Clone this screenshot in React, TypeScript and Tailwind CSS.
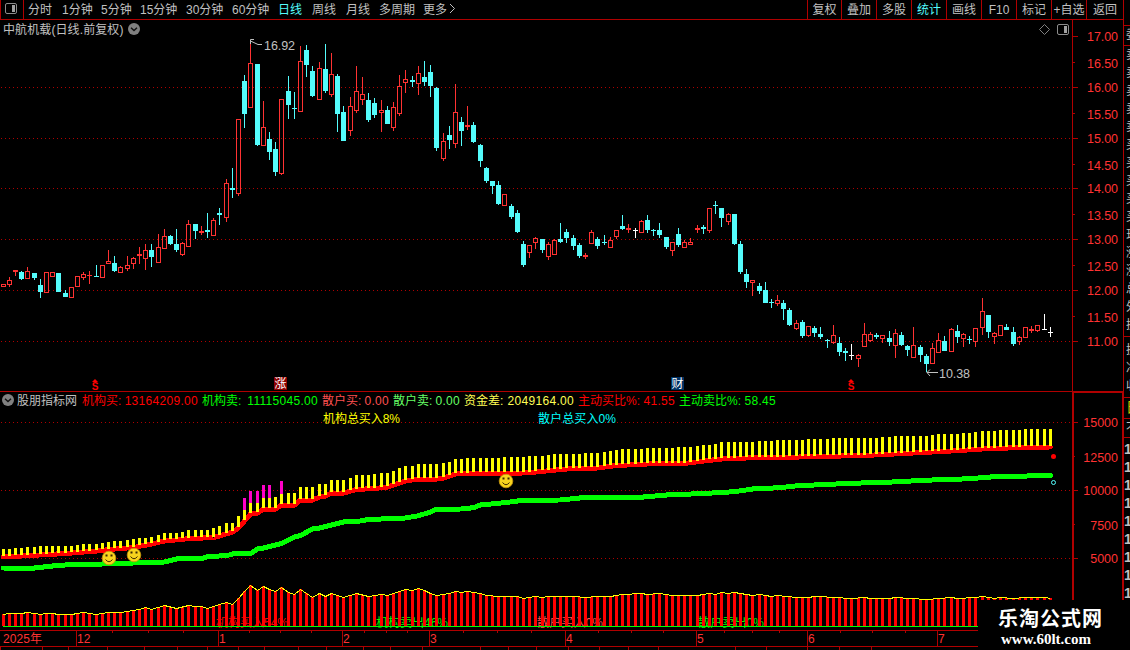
// App.tsx
// 行情日K线页：顶部周期工具栏、K线主图、资金指标副图、日期轴、右侧盘口边条。

type Kind = "r" | "c" | "w";
// [颜色, 最高, 实体上沿, 实体下沿, 最低]，单位为像素
type Candle = [Kind, number, number, number, number];
type Point = [number, number];

const candles: Candle[] = [
  ["r", 284, 284, 287, 287], ["r", 277, 280, 285, 287], ["r", 270, 270, 272, 276], ["c", 271, 272, 279, 280],
  ["r", 267, 271, 279, 279], ["c", 273, 273, 278, 280], ["c", 279, 285, 292, 298], ["r", 272, 272, 293, 293],
  ["r", 272, 272, 277, 277], ["c", 273, 273, 292, 292], ["c", 290, 293, 297, 297], ["r", 287, 287, 298, 298],
  ["r", 276, 276, 287, 287], ["r", 272, 274, 278, 280], ["r", 271, 275, 276, 284], ["c", 265, 276, 277, 277],
  ["r", 265, 265, 278, 278], ["r", 250, 261, 264, 264], ["c", 256, 263, 271, 272], ["r", 266, 267, 273, 273],
  ["r", 256, 265, 269, 271], ["r", 257, 258, 264, 269], ["r", 247, 254, 256, 264], ["r", 244, 250, 259, 270],
  ["c", 244, 250, 257, 267], ["r", 234, 247, 263, 263], ["r", 229, 236, 249, 249], ["c", 235, 236, 244, 245],
  ["c", 229, 244, 250, 252], ["r", 242, 243, 255, 256], ["r", 220, 224, 247, 247], ["c", 224, 224, 231, 239],
  ["r", 226, 231, 233, 235], ["c", 213, 230, 232, 238], ["r", 218, 220, 236, 236], ["c", 208, 213, 215, 225],
  ["r", 179, 183, 218, 222], ["c", 168, 188, 190, 198], ["r", 119, 119, 194, 196], ["c", 75, 81, 114, 128],
  ["r", 43, 63, 108, 108], ["c", 64, 64, 145, 146], ["r", 101, 127, 146, 146], ["c", 132, 139, 152, 160],
  ["c", 142, 149, 172, 176], ["r", 99, 99, 174, 175], ["c", 76, 91, 105, 119], ["c", 92, 108, 109, 119],
  ["r", 46, 61, 112, 112], ["c", 45, 50, 65, 77], ["c", 66, 71, 96, 97], ["r", 62, 68, 100, 100],
  ["c", 44, 69, 91, 93], ["r", 53, 74, 95, 97], ["c", 74, 76, 114, 132], ["c", 106, 112, 141, 141],
  ["r", 97, 106, 131, 136], ["r", 66, 91, 111, 113], ["r", 77, 94, 100, 105], ["c", 93, 100, 120, 122],
  ["c", 98, 103, 115, 118], ["r", 100, 110, 113, 132], ["c", 106, 110, 124, 124], ["r", 102, 107, 128, 131],
  ["r", 75, 86, 114, 116], ["r", 70, 79, 83, 93], ["c", 76, 80, 82, 87], ["r", 66, 73, 84, 95],
  ["c", 61, 77, 82, 86], ["c", 65, 72, 86, 97], ["c", 87, 88, 148, 151], ["r", 133, 141, 159, 161],
  ["c", 126, 135, 140, 149], ["r", 84, 112, 144, 148], ["c", 117, 122, 131, 146], ["r", 106, 125, 127, 130],
  ["c", 122, 125, 142, 143], ["c", 144, 145, 161, 167], ["c", 167, 168, 181, 183], ["c", 181, 181, 186, 194],
  ["c", 181, 185, 204, 205], ["r", 194, 194, 206, 206], ["c", 204, 206, 217, 219], ["c", 210, 213, 232, 233],
  ["c", 241, 244, 265, 267], ["r", 245, 245, 253, 258], ["r", 237, 238, 243, 249], ["c", 239, 239, 250, 253],
  ["r", 242, 244, 257, 260], ["r", 239, 240, 255, 255], ["c", 223, 239, 242, 243], ["c", 229, 232, 238, 243],
  ["c", 235, 238, 246, 250], ["c", 243, 245, 256, 258], ["r", 253, 255, 257, 259], ["r", 230, 232, 244, 244],
  ["c", 237, 239, 246, 249], ["c", 235, 242, 243, 245], ["r", 237, 240, 248, 248], ["r", 230, 230, 237, 239],
  ["c", 215, 226, 229, 230], ["r", 224, 228, 230, 233], ["w", 228, 230, 231, 238], ["r", 220, 221, 233, 233],
  ["c", 215, 220, 230, 233], ["c", 229, 230, 231, 236], ["c", 223, 230, 235, 238], ["c", 237, 237, 247, 249],
  ["r", 242, 242, 251, 256], ["c", 228, 234, 245, 247], ["r", 240, 242, 248, 248], ["r", 238, 242, 245, 245],
  ["r", 225, 228, 230, 233], ["c", 225, 227, 229, 234], ["r", 208, 208, 231, 233], ["c", 201, 205, 206, 214],
  ["c", 208, 208, 218, 227], ["r", 213, 214, 222, 225], ["c", 214, 214, 244, 245], ["c", 241, 244, 272, 274],
  ["c", 269, 274, 282, 288], ["r", 280, 280, 283, 296], ["c", 283, 286, 291, 294], ["c", 282, 290, 303, 303],
  ["c", 299, 302, 303, 308], ["r", 295, 300, 304, 306], ["c", 300, 303, 309, 320], ["c", 308, 310, 325, 326],
  ["r", 320, 323, 329, 330], ["c", 320, 322, 336, 338], ["r", 326, 326, 336, 337], ["c", 326, 328, 333, 337],
  ["c", 327, 334, 337, 339], ["c", 339, 340, 341, 348], ["r", 325, 335, 343, 344], ["c", 337, 343, 352, 356],
  ["c", 348, 351, 353, 361], ["w", 344, 355, 356, 360], ["r", 354, 355, 359, 367], ["r", 323, 334, 347, 347],
  ["r", 332, 334, 341, 342], ["c", 333, 335, 337, 339], ["r", 335, 335, 339, 343], ["c", 331, 338, 342, 346],
  ["r", 329, 333, 346, 358], ["c", 332, 335, 345, 346], ["c", 345, 346, 350, 356], ["r", 327, 345, 358, 358],
  ["c", 345, 347, 355, 362], ["c", 354, 356, 364, 372], ["r", 343, 348, 364, 364], ["r", 333, 340, 353, 353],
  ["c", 336, 341, 351, 351], ["r", 328, 329, 352, 352], ["c", 325, 331, 337, 343], ["r", 333, 334, 339, 347],
  ["c", 336, 339, 340, 344], ["r", 328, 328, 342, 347], ["r", 298, 311, 328, 335], ["c", 315, 315, 332, 338],
  ["r", 332, 333, 337, 344], ["r", 325, 325, 336, 336], ["c", 324, 327, 330, 330], ["c", 327, 332, 344, 346],
  ["r", 336, 337, 342, 345], ["r", 327, 327, 338, 338], ["r", 326, 329, 331, 333], ["r", 325, 325, 331, 332],
  ["w", 314, 329, 330, 330], ["w", 327, 332, 333, 337],
];

const fill: Record<Kind, string> = { r: "#ff3232", c: "#54fcfc", w: "#ffffff" };

// 以下序列按 [K线序号, y] 给出拐点，中间线性插值
const barTop: Point[] = [
  [0, 549], [1, 549], [2, 548], [4, 547], [7, 546], [11, 546], [12, 545], [13, 544], [15, 544], [16, 543], [17, 542],
  [20, 540], [22, 538], [24, 537], [26, 533], [28, 533], [30, 530], [33, 530], [35, 526], [36, 523], [37, 523],
  [38, 516], [39, 510], [40, 503], [41, 503], [42, 498], [43, 498], [44, 497], [45, 494], [46, 493], [47, 493],
  [48, 487], [50, 487], [51, 484], [52, 484], [53, 480], [55, 480], [56, 478], [57, 475], [59, 475], [61, 473],
  [62, 473], [63, 471], [64, 468], [65, 466], [66, 466], [67, 464], [70, 464], [72, 462], [73, 459], [74, 459],
  [75, 458], [80, 458], [81, 457], [84, 457], [85, 456], [87, 456], [89, 454], [93, 454], [94, 453], [96, 453],
  [100, 449], [103, 449], [104, 448], [108, 448], [109, 447], [111, 447], [113, 445], [114, 445], [115, 444],
  [116, 442], [121, 442], [122, 441], [124, 441], [125, 440], [129, 440], [130, 439], [133, 439], [134, 438],
  [141, 438], [142, 437], [143, 437], [144, 436], [149, 436], [151, 434], [154, 434], [155, 433], [156, 433],
  [158, 431], [160, 431], [161, 430], [164, 430], [165, 429], [169, 429],
];
const redLine: Point[] = [
  [0, 557], [10, 553.5], [15, 551], [18, 549], [21, 547.5], [24, 544], [26, 541], [30, 538.7], [34, 537.5], [35, 536],
  [37, 532], [38, 528], [39, 521], [40, 514], [41, 513], [42, 509], [44, 509], [45, 505], [47, 505], [48, 500],
  [50, 500], [51, 497], [52, 496], [53, 493], [55, 493], [57, 489.5], [60, 488.5], [62, 487], [64, 483], [65, 481],
  [67, 479], [70, 479], [71, 478], [73, 474], [75, 473.5], [84, 473], [86, 472], [91, 469], [96, 468], [99, 465.5],
  [104, 464], [110, 463.5], [113, 461], [116, 459], [120, 458], [125, 457.7], [130, 456.7], [139, 455.5],
  [147, 453], [153, 451], [158, 449], [165, 447.3], [169, 447],
];
const greenLine: Point[] = [
  [0, 568], [5, 568], [8, 566], [10, 565], [16, 564], [21, 563], [26, 562], [28, 559], [32, 558.7], [33, 556.5],
  [36, 555.7], [37, 554], [40, 553.5], [41, 549], [42, 548], [45, 543.5], [47, 537], [48, 535.5], [50, 529],
  [51, 528], [53, 525], [55, 522], [57, 521.7], [59, 519.5], [61, 519], [65, 518], [67, 515.7], [69, 512],
  [70, 509.2], [74, 509], [76, 507.7], [77, 505], [81, 502.7], [84, 500.2], [90, 500], [93, 498], [102, 497.7],
  [107, 495], [113, 493.5], [118, 491.7], [121, 489], [126, 487.5], [127, 486.3], [131, 485], [137, 483.3],
  [145, 481.7], [148, 480.3], [152, 479.7], [156, 478.7], [160, 476.7], [169, 475.5],
];
const volumeTop: Point[] = [
  [0, 614], [1, 613], [3, 613], [4, 612], [5, 613], [6, 614], [7, 613], [8, 613], [9, 614], [11, 614], [13, 612],
  [15, 614], [17, 612], [19, 612], [22, 609], [23, 607], [24, 609], [26, 605], [28, 608], [30, 605], [31, 606],
  [32, 606], [33, 608], [35, 604], [36, 602], [37, 604], [38, 598], [39, 591], [40, 585], [41, 590], [42, 586],
  [43, 589], [44, 591], [45, 587], [46, 592], [47, 594], [48, 589], [49, 593], [50, 597], [51, 593], [52, 596],
  [53, 593], [54, 595], [55, 597], [57, 593], [59, 596], [61, 594], [62, 595], [63, 593], [64, 591], [65, 589],
  [66, 590], [67, 588], [68, 590], [69, 593], [70, 595], [72, 593], [73, 591], [74, 592], [75, 591], [77, 593],
  [78, 595], [80, 596], [83, 596], [84, 598], [86, 596], [87, 597], [88, 596], [92, 596], [94, 597], [96, 596],
  [98, 596], [100, 594], [103, 593], [104, 594], [106, 593], [108, 595], [112, 595], [114, 593], [115, 594],
  [116, 592], [117, 593], [118, 592], [121, 595], [122, 594], [124, 596], [125, 595], [128, 597], [130, 597],
  [131, 596], [132, 596], [134, 597], [137, 598], [139, 597], [140, 598], [143, 598], [144, 597], [149, 599],
  [153, 597], [154, 598], [157, 597], [158, 596], [160, 598], [161, 597], [163, 598], [165, 597], [168, 597],
  [169, 598],
];
const magentaBars: [number, number, number][] = [
  [39, 498, 510], [40, 491, 503], [41, 491, 503], [42, 485, 498], [43, 485, 498], [45, 481, 494],
];

const cx = (i: number) => Math.floor(3.1 + 6.196 * i);

function at(points: Point[], i: number) {
  const k = points.findIndex((p) => p[0] >= i);
  if (k <= 0) return points[0][1];
  const [x0, y0] = points[k - 1];
  const [x1, y1] = points[k];
  return y0 + ((y1 - y0) * (i - x0)) / (x1 - x0);
}

const path = (points: Point[], dy = 0) =>
  points.map(([i, y]) => `${cx(i) + 0.5},${y + dy}`).join(" ");

const periods = [
  { name: "分时", width: "w-[34px]" },
  { name: "1分钟", width: "w-[39px]" },
  { name: "5分钟", width: "w-[39px]" },
  { name: "15分钟", width: "w-[46px]" },
  { name: "30分钟", width: "w-[46px]" },
  { name: "60分钟", width: "w-[46px]" },
  { name: "日线", width: "w-[34px]" },
  { name: "周线", width: "w-[34px]" },
  { name: "月线", width: "w-[33px]" },
  { name: "多周期", width: "w-[44px]" },
  { name: "更多", width: "w-[27px]" },
];
const actions = ["复权", "叠加", "多股", "统计", "画线", "F10", "标记", "+自选", "返回"];

const stats = [
  { label: "机构买:", value: "13164209.00", color: "text-[#ff0000]", width: "w-[120px]" },
  { label: "机构卖:", value: "11115045.00", color: "text-[#00ff00]", width: "w-[120px]" },
  { label: "散户买:", value: "0.00", color: "text-[#ff5050]", width: "w-[71px]" },
  { label: "散户卖:", value: "0.00", color: "text-[#66ff66]", width: "w-[71px]" },
  { label: "资金差:", value: "2049164.00", color: "text-[#ffff54]", width: "w-[114px]" },
  { label: "主动买比%:", value: "41.55", color: "text-[#ff0000]", width: "w-[101px]" },
  { label: "主动卖比%:", value: "58.45", color: "text-[#00ff00]", width: "w-[101px]" },
];

const priceTicks: [string, number][] = [
  ["17.00", 36], ["16.50", 62], ["16.00", 87], ["15.50", 113], ["15.00", 138], ["14.50", 164], ["14.00", 188],
  ["13.50", 214], ["13.00", 239], ["12.50", 265], ["12.00", 290], ["11.50", 316], ["11.00", 341],
];
const fundTicks: [string, number][] = [
  ["15000", 422], ["12500", 456], ["10000", 490], ["7500", 524], ["5000", 558],
];
const months: [string, number][] = [
  ["12", 76], ["1", 218], ["2", 342], ["3", 429], ["4", 565], ["5", 696], ["6", 807], ["7", 937],
];
const minorTicks = [
  112, 148, 183, 249, 280, 311, 364, 386, 407, 463, 497, 531, 598, 631, 663, 724, 752, 779, 840, 872, 905,
];
const footerTicks = [
  0, 42, 68, 107, 144, 177, 207, 238, 264, 298, 326, 363, 390, 422, 480, 508, 536, 568, 599, 628, 658, 735, 766, 807,
  839, 871,
];

// 盘口栏只露出左边缘
const quoteRows = ["卖", "卖", "卖", "卖", "卖", "买", "买", "买", "买", "买", "现", "涨", "涨", "总", "外", "换"];
const tradeRows = ["1", "1", "1", "1", "1", "1", "1", "1", "1"];

function PanelIcon() {
  return (
    <svg width="12" height="11" viewBox="0 0 12 11" className="shrink-0">
      <rect x="0.5" y="0.5" width="11" height="10" rx="1.5" fill="none" stroke="#8c8c8c" />
      <rect x="7" y="2" width="3" height="7" fill="#a0a0a0" />
    </svg>
  );
}

function ChevronDot() {
  return (
    <svg width="12" height="12" viewBox="0 0 12 12" className="shrink-0">
      <circle cx="6" cy="6" r="6" fill="#808080" />
      <path d="M3 4.8 6 7.6 9 4.8" fill="none" stroke="#101010" strokeWidth="1.4" />
    </svg>
  );
}

function Toolbar() {
  return (
    <div className="flex h-5 w-[1124px] border-r border-b border-[#b00000] leading-5">
      <div className="flex w-6 items-center border-r border-l border-[#b00000] pb-0.5 pl-1">
        <PanelIcon />
      </div>
      <div className="flex pl-1">
        {periods.map((p) => (
          <span
            key={p.name}
            className={`${p.width} whitespace-nowrap ${p.name === "日线" ? "text-[#54fcfc]" : ""}`}
          >
            {p.name}
          </span>
        ))}
        <svg width="8" height="12" viewBox="0 0 8 12" className="mt-[3px] -ml-px">
          <path d="M1 1 5.5 5.5 1 10" fill="none" stroke="#c0c0c0" />
        </svg>
      </div>
      <div className="ml-auto flex">
        {actions.map((name) => (
          <span
            key={name}
            className={`w-[35px] border-l border-[#b00000] text-center whitespace-nowrap first:w-[34px] last:w-[37px] ${
              name === "统计" ? "text-[#54fcfc]" : ""
            }`}
          >
            {name}
          </span>
        ))}
      </div>
    </div>
  );
}

function Grid({ ys }: { ys: number[] }) {
  return (
    <>
      {ys.map((y) => (
        <line key={y} x1="1" x2="1072" y1={y + 0.5} y2={y + 0.5} stroke="#b00000" strokeDasharray="1 3" />
      ))}
    </>
  );
}

function CandleShape({ i, c }: { i: number; c: Candle }) {
  const [kind, high, top, bottom, low] = c;
  const x = cx(i);
  const color = fill[kind];
  const hollow = kind === "r" && bottom - top > 2;
  return (
    <g fill={color}>
      {top > high && <rect x={x} y={high} width="1" height={top - high} />}
      {low > bottom && <rect x={x} y={bottom} width="1" height={low - bottom} />}
      {hollow ? (
        <rect x={x - 1.5} y={top + 0.5} width="4" height={bottom - top - 1} fill="none" stroke={color} />
      ) : (
        <rect x={x - 2} y={top} width="5" height={bottom - top} />
      )}
    </g>
  );
}

function Dividend({ x }: { x: number }) {
  return (
    <g>
      <path d={`M${x - 3} 382 L${x} 379 L${x + 3} 382 Z`} fill="#ff0000" />
      <text x={x} y="390" textAnchor="middle" fill="#ff0000" fontSize="10" fontWeight="700">
        S
      </text>
    </g>
  );
}

function PriceChart() {
  return (
    <svg width="1072" height="353" viewBox="0 38 1072 353" className="block">
      <g shapeRendering="crispEdges">
        <Grid ys={[87, 138, 188, 239, 290, 341]} />
        {candles.map((c, i) => (
          <CandleShape key={i} i={i} c={c} />
        ))}
      </g>
      <g fill="none" stroke="#c0c0c0">
        <path d="M262 44.5 H258 L250.5 41 M254 39.5 H250.5 V44" />
        <path d="M938 372.5 H927 M930 369.5 L927 372.5 L930 376" />
      </g>
      <g fill="#c0c0c0" fontSize="12.5">
        <text x="264" y="50" textLength="31">16.92</text>
        <text x="939" y="378" textLength="31">10.38</text>
      </g>
      <Dividend x={95} />
      <Dividend x={851} />
      <rect x="274" y="377" width="13" height="13" fill="#8c0000" />
      <text x="274.5" y="388" fill="#ffffff" fontSize="12">涨</text>
      <rect x="671" y="377" width="13" height="13" fill="#003264" />
      <text x="671.5" y="388" fill="#ffffff" fontSize="12">财</text>
    </svg>
  );
}

function Smile({ x, y }: { x: number; y: number }) {
  return (
    <g>
      <circle cx={x} cy={y} r="6.8" fill="#f7d31e" stroke="#c8960a" strokeWidth="0.8" />
      <rect x={x - 3.5} y={y - 3.5} width="2" height="2" fill="#3c2800" />
      <rect x={x + 1.5} y={y - 3.5} width="2" height="2" fill="#3c2800" />
      <path d={`M${x - 3.5} ${y + 1.5} Q${x} ${y + 6} ${x + 3.5} ${y + 1.5}`} fill="none" stroke="#3c2800" />
    </g>
  );
}

function FundChart() {
  return (
    <svg width="1072" height="222" viewBox="0 408 1072 222" className="block">
      <g shapeRendering="crispEdges">
        <Grid ys={[422, 490, 558]} />
      </g>
      <g fontSize="12">
        <text x="323" y="423" fill="#ffff00" textLength="77">机构总买入8%</text>
        <text x="538" y="423" fill="#00ffff" textLength="78">散户总买入0%</text>
      </g>
      {/* 底部文字压在量柱下面 */}
      <g fontSize="12">
        <text x="216" y="627" fill="#ff0000" textLength="72">机构买入54%</text>
        <text x="376" y="627" fill="#00ff00" textLength="72">机构卖出46%</text>
        <text x="537" y="627" fill="#ff5050" textLength="66">散户买入0%</text>
        <text x="698" y="627" fill="#00ff00" textLength="66">散户卖出0%</text>
      </g>
      <g shapeRendering="crispEdges">
        <polyline points={path(redLine)} fill="none" stroke="#ff0000" strokeWidth="5" strokeLinecap="round" />
        {candles.map((_, i) => {
          const y = Math.round(at(barTop, i));
          return (
            <rect key={i} x={cx(i) - 1} y={y} width="3" height={Math.round(at(redLine, i)) - 1 - y} fill="#ffff00" />
          );
        })}
        {magentaBars.map(([i, y0, y1]) => (
          <rect key={i} x={cx(i) - 1} y={y0} width="3" height={y1 - y0} fill="#ff00c8" />
        ))}
        <polyline points={path(greenLine)} fill="none" stroke="#00ff00" strokeWidth="5" strokeLinecap="round" />
        {candles.map((_, i) => {
          const y = Math.round(at(volumeTop, i));
          return <rect key={i} x={cx(i) - 1} y={y} width="3" height={626 - y} fill="#ff0000" />;
        })}
        <polyline points={path(volumeTop, 0.5)} fill="none" stroke="#ffff00" />
        <rect x="3" y="626" width="1048" height="1" fill="#00ff00" />
      </g>
      <circle cx="1053.5" cy="456.5" r="2.5" fill="#ff0000" />
      <circle cx="1053.5" cy="482.5" r="2" fill="none" stroke="#54fcfc" />
      <Smile x={109} y={558} />
      <Smile x={134} y={555} />
      <Smile x={506} y={481} />
    </svg>
  );
}

function DateAxis() {
  return (
    <svg width="1072" height="20" viewBox="0 630 1072 20" className="block">
      <g fill="#b00000" shapeRendering="crispEdges">
        <rect x="0" y="630" width="1072" height="1" />
        <rect x="0" y="646" width="1072" height="1" />
        {minorTicks.map((x) => (
          <rect key={x} x={x} y="631" width="1" height="2" />
        ))}
        {months.map(([, x]) => (
          <rect key={x} x={x} y="631" width="1" height="15" />
        ))}
        {footerTicks.map((x) => (
          <rect key={x} x={x} y="647" width="1" height="3" />
        ))}
      </g>
      <g fill="#ff3232" fontSize="12">
        <text x="3" y="643" textLength="39">2025年</text>
        {months.map(([name, x]) => (
          <text key={name} x={x + 1} y="643">
            {name}
          </text>
        ))}
      </g>
    </svg>
  );
}

function ValueAxis() {
  return (
    <svg width="52" height="630" viewBox="1072 20 52 630" className="block shrink-0">
      <g fill="#b00000" shapeRendering="crispEdges">
        <rect x="1072" y="20" width="1" height="371" />
        <rect x="1123" y="20" width="1" height="371" />
        <rect x="1072" y="391" width="52" height="2" />
        <rect x="1072" y="392" width="2" height="258" />
        <rect x="1122" y="392" width="2" height="258" />
        {priceTicks.map(([name, y], i) => (
          <rect key={name} x="1073" y={y} width={i % 2 ? 2 : 5} height="1" />
        ))}
        {fundTicks.map(([name, y], i) => (
          <rect key={name} x="1073" y={y} width={i % 2 ? 2 : 5} height="1" />
        ))}
      </g>
      <g fill="#ff3232" fontSize="12.5">
        {priceTicks.map(([name, y], i) => (
          <text key={name} x="1087" y={y + (i % 2 ? 6 : 5)} textLength="31">
            {name}
          </text>
        ))}
        {fundTicks.map(([name, y], i) => (
          <text key={name} x="1118" y={y + (i % 2 ? 6 : 5)} textAnchor="end">
            {name}
          </text>
        ))}
      </g>
    </svg>
  );
}

function QuoteStrip() {
  return (
    <div className="mt-[5px] flex h-[625px] w-1.5 shrink-0 flex-col overflow-hidden border-t border-[#b00000] leading-[18px]">
      <div className="h-5 shrink-0 border-b border-[#b00000] pl-0.5">委</div>
      <div className="h-[291px] shrink-0 border-b border-[#b00000] pl-0.5">
        {quoteRows.map((name, i) => (
          <div key={i} className="h-[18px] w-3">
            {name}
          </div>
        ))}
      </div>
      <div className="h-[61px] shrink-0 border-b border-[#b00000] pt-1 pl-0.5">
        <div className="w-3">换</div>
        <div className="w-3">净</div>
        <div className="w-3">收</div>
      </div>
      <div className="h-[21px] shrink-0 border-b border-[#b00000] pl-0.5 text-[14px] text-[#c8c800]">日</div>
      <div className="h-[19px] shrink-0 border-b border-[#b00000] pl-0.5">不</div>
      <div className="pt-0.5">
        {tradeRows.map((name, i) => (
          <div key={i} className="h-[18px] w-3 text-[14px] font-bold">
            {name}
          </div>
        ))}
      </div>
    </div>
  );
}

export default function App() {
  return (
    <div className="relative h-[650px] w-[1130px] overflow-hidden bg-black font-['Liberation_Sans','Noto_Sans_CJK_SC',sans-serif] text-[12px] text-[#c0c0c0]">
      <Toolbar />
      <div className="flex">
        <div className="w-[1072px] shrink-0">
          <div className="flex h-[18px] items-center pr-[3px] pl-[3px] leading-[18px]">
            <span className="w-[125px] pt-0.5 tracking-[0.1px] whitespace-nowrap">中航机载(日线.前复权)</span>
            <ChevronDot />
            <svg width="11" height="11" viewBox="0 0 11 11" className="mr-[7px] ml-auto">
              <path d="M5.5 0.5 10.5 5.5 5.5 10.5 0.5 5.5Z" fill="none" stroke="#808080" />
            </svg>
            <PanelIcon />
          </div>
          <PriceChart />
          <div className="flex h-[17px] items-center border-t border-[#b00000] pl-0.5 leading-4 whitespace-nowrap">
            <ChevronDot />
            <span className="w-[68px] pt-0.5 pl-[3px]">股朋指标网</span>
            {stats.map((s) => (
              <span key={s.label} className={`${s.width} ${s.color} flex shrink-0 justify-between pt-0.5 pr-1`}>
                <span>{s.label}</span>
                <span className="tracking-[0.3px]">{s.value}</span>
              </span>
            ))}
          </div>
          <FundChart />
          <DateAxis />
        </div>
        <ValueAxis />
        <QuoteStrip />
      </div>
      <div className="absolute top-[600px] left-[978px] flex h-[50px] w-[152px] flex-col bg-black">
        <svg width="152" height="50" viewBox="978 600 152 50">
          <text x="998" y="626" fill="#ffffff" fontSize="20" fontWeight="700" textLength="104">
            乐淘公式网
          </text>
          <text
            x="1001"
            y="644"
            fill="#ffffff"
            fontSize="15"
            fontWeight="700"
            textLength="90"
            className="font-['Liberation_Serif',serif]"
          >
            www.60lt.com
          </text>
        </svg>
      </div>
    </div>
  );
}
